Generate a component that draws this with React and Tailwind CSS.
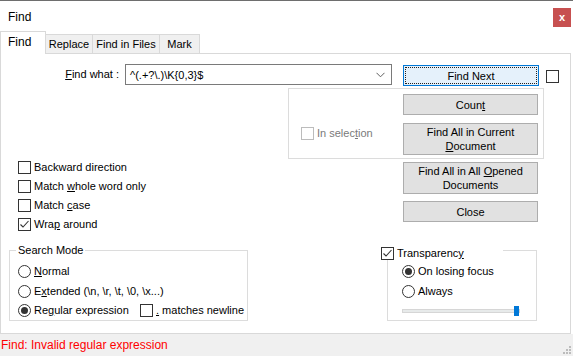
import React from "react";

const Check = ({ checked = false, disabled = false }) => (
  <span
    className={
      disabled
        ? "w-[13px] h-[13px] border border-[#bcbcbc] bg-white shrink-0 flex items-center justify-center"
        : "w-[13px] h-[13px] border border-[#333333] bg-white shrink-0 flex items-center justify-center"
    }
  >
    {checked && (
      <svg width="11" height="11" viewBox="0 0 11 11">
        <path d="M1.5 5.5 L4 8 L9.5 2" fill="none" stroke="#333333" strokeWidth="1.1" />
      </svg>
    )}
  </span>
);

const Radio = ({ on = false }) => (
  <span className="w-[13px] h-[13px] rounded-full border border-[#333333] bg-white shrink-0 flex items-center justify-center">
    {on && <span className="w-[7px] h-[7px] rounded-full bg-[#333333]" />}
  </span>
);

const Btn = ({ children, tall = false }) => (
  <div
    className={
      tall
        ? "w-[135px] h-[32px] border border-[#adadad] bg-[#e1e1e1] flex items-center justify-center text-center leading-[14px]"
        : "w-[135px] h-[21px] border border-[#adadad] bg-[#e1e1e1] flex items-center justify-center text-center leading-[14px]"
    }
  >
    <span>{children}</span>
  </div>
);

const CheckRow = ({ checked, children }) => (
  <div className="flex items-center gap-[3px] h-[13px]">
    <Check checked={checked} />
    <span className="leading-[13px]">{children}</span>
  </div>
);

export default function App() {
  return (
    <div className="w-[573px] h-[356px] bg-white flex flex-col overflow-hidden text-[11px] text-black font-['Liberation_Sans',Arial,sans-serif]">
      {/* Title bar */}
      <div className="h-[31px] border-t border-[#6e6e6e] flex items-start justify-between pl-[8px] pr-[2px] shrink-0">
        <span className="text-[12px] mt-[9px] leading-[14px]">Find</span>
        <div className="w-[18px] h-[19px] mt-[7px] bg-[#c75050] flex items-center justify-center text-white font-bold text-[11px] leading-none">
          x
        </div>
      </div>

      {/* Tabs */}
      <div className="h-[22px] flex items-end shrink-0">
        <div className="relative z-10 -mb-px w-[46px] h-[23px] bg-white border border-b-0 border-[#d9d9d9] pl-[7px] pt-[3px] text-[12px] leading-[14px]">
          Find
        </div>
        <div className="w-[47px] h-[19px] bg-[#f0f0f0] border border-l-0 border-b-0 border-[#d9d9d9] flex items-center justify-center">
          Replace
        </div>
        <div className="w-[67px] h-[19px] bg-[#f0f0f0] border border-l-0 border-b-0 border-[#d9d9d9] flex items-center justify-center">
          Find in Files
        </div>
        <div className="w-[40px] h-[19px] bg-[#f0f0f0] border border-l-0 border-b-0 border-[#d9d9d9] flex items-center justify-center">
          Mark
        </div>
      </div>

      {/* Panel */}
      <div className="w-[571px] h-[281px] border border-[#d9d9d9] bg-white flex flex-col shrink-0">
        {/* Find what row */}
        <div className="flex items-start mt-[10px] h-[22px]">
          <div className="w-[118px] text-right leading-[21px]">
            <u>F</u>ind what :
          </div>
          <div className="ml-[6px] w-[267px] h-[21px] border border-[#7a7a7a] flex items-center justify-between pl-[4px] pr-[6px]">
            <span className="leading-[14px]">^(.+?\.)\K{"{"}0,3{"}"}$</span>
            <svg width="9" height="6" viewBox="0 0 9 6">
              <path d="M0.5 0.8 L4.5 4.8 L8.5 0.8" fill="none" stroke="#606060" strokeWidth="1" />
            </svg>
          </div>
          <div className="ml-[11px] mt-[1px] w-[136px] h-[21px] border border-[#0078d7] bg-[#e5f1fb] p-[1px]">
            <div className="w-full h-full border border-dotted border-[#202020] flex items-center justify-center leading-[14px]">
              Find Next
            </div>
          </div>
          <div className="ml-[7px] mt-[6px]">
            <Check />
          </div>
        </div>

        {/* In selection group */}
        <div className="mt-[2px] ml-[287px] w-[256px] h-[71px] border border-[#dcdcdc] flex">
          <div className="w-[114px] pl-[12px] pt-[38px]">
            <div className="flex items-center gap-[3px] h-[13px] text-[#7a7a7a]">
              <Check disabled />
              <span className="leading-[13px]">
                In selec<u>t</u>ion
              </span>
            </div>
          </div>
          <div className="flex flex-col gap-[8px] pt-[5px]">
            <Btn>
              Coun<u>t</u>
            </Btn>
            <Btn tall>
              Find All in Current
              <br />
              <u>D</u>ocument
            </Btn>
          </div>
        </div>

        {/* Options + buttons */}
        <div className="flex">
          <div className="w-[402px] pl-[17px] pt-[2px] flex flex-col gap-[6px]">
            <CheckRow>Backward direction</CheckRow>
            <CheckRow>
              Match <u>w</u>hole word only
            </CheckRow>
            <CheckRow>
              Match <u>c</u>ase
            </CheckRow>
            <CheckRow checked>
              Wra<u>p</u> around
            </CheckRow>
          </div>
          <div className="flex flex-col gap-[7px] pt-[3px]">
            <Btn tall>
              Find All in All <u>O</u>pened
              <br />
              Documents
            </Btn>
            <Btn>Close</Btn>
          </div>
        </div>

        {/* Bottom groups */}
        <div className="flex mt-[19px]">
          <div className="relative ml-[8px] w-[239px] h-[71px] border border-[#dcdcdc] pl-[8px] pt-[14px]">
            <span className="absolute -top-[8px] left-[6px] bg-white px-[2px] leading-[14px]">Search Mode</span>
            <div className="flex items-center gap-[3px] h-[13px]">
              <Radio />
              <span className="leading-[13px]">
                <u>N</u>ormal
              </span>
            </div>
            <div className="flex items-center gap-[3px] h-[13px] mt-[7px]">
              <Radio />
              <span className="leading-[13px]">
                E<u>x</u>tended (\n, \r, \t, \0, \x...)
              </span>
            </div>
            <div className="flex items-center h-[13px] mt-[6px]">
              <div className="flex items-center gap-[3px] w-[122px]">
                <Radio on />
                <span className="leading-[13px]">
                  Re<u>g</u>ular expression
                </span>
              </div>
              <div className="flex items-center gap-[3px]">
                <Check />
                <span className="leading-[13px]">
                  <u>.</u> matches newline
                </span>
              </div>
            </div>
          </div>

          <div className="relative ml-[139px] w-[150px] h-[71px] border border-[#dcdcdc] pl-[14px] pt-[14px]">
            <div className="absolute -top-[4px] -left-[7px] w-[122px] h-[13px] bg-white flex items-center gap-[3px]">
              <Check checked />
              <span className="leading-[13px]">
                Transparenc<u>y</u>
              </span>
            </div>
            <div className="flex items-center gap-[3px] h-[13px]">
              <Radio on />
              <span className="leading-[13px]">On losing focus</span>
            </div>
            <div className="flex items-center gap-[3px] h-[13px] mt-[7px]">
              <Radio />
              <span className="leading-[13px]">Always</span>
            </div>
            <div className="relative mt-[11px] w-[118px] h-[4px] border border-[#d6d6d6] bg-[#e7eaea]">
              <span className="absolute -top-[4px] right-0 w-[5px] h-[10px] bg-[#0078d7]" />
            </div>
          </div>
        </div>
      </div>

      {/* Status bar */}
      <div className="relative flex-1 bg-[#f0f0f0] flex items-center pl-[1px]">
        <span className="text-[#ff0000] text-[12px] leading-[14px]">Find: Invalid regular expression</span>
        <svg className="absolute right-[1px] bottom-[1px]" width="10" height="10" viewBox="0 0 10 10">
          <rect x="7" y="1" width="2" height="2" fill="#bcbcbc" />
          <rect x="4" y="4" width="2" height="2" fill="#bcbcbc" />
          <rect x="7" y="4" width="2" height="2" fill="#bcbcbc" />
          <rect x="1" y="7" width="2" height="2" fill="#bcbcbc" />
          <rect x="4" y="7" width="2" height="2" fill="#bcbcbc" />
          <rect x="7" y="7" width="2" height="2" fill="#bcbcbc" />
        </svg>
      </div>
    </div>
  );
}
